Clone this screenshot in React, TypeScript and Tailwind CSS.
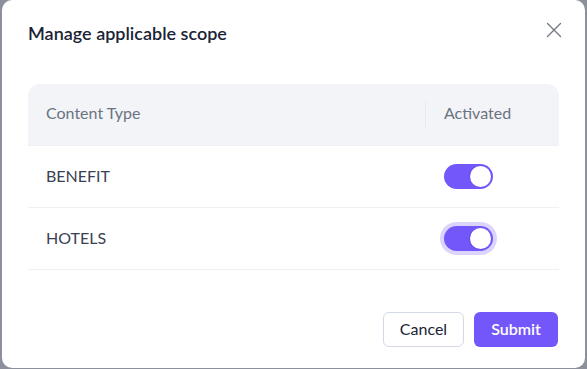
import { useState } from 'react'

interface ScopeRow {
  id: string
  label: string
  active: boolean
}

const initialRows: ScopeRow[] = [
  { id: 'benefit', label: 'BENEFIT', active: true },
  { id: 'hotels', label: 'HOTELS', active: true },
]

function Toggle({ checked, focused, onChange }: { checked: boolean; focused?: boolean; onChange: () => void }) {
  return (
    <button
      type="button"
      role="switch"
      aria-checked={checked}
      onClick={onChange}
      className={`relative flex h-[25px] w-[49px] items-center rounded-full p-[2px] ${
        checked ? 'justify-end bg-[#7457fb]' : 'justify-start bg-gray-300'
      } ${focused ? 'ring-[4px] ring-[#dcd4fd]' : ''}`}
    >
      <span className="block h-[21px] w-[21px] rounded-full bg-white shadow-[-1px_0_1px_rgba(60,30,160,0.25)]" />
    </button>
  )
}

export default function App() {
  const [rows, setRows] = useState<ScopeRow[]>(initialRows)

  const toggleRow = (id: string) => {
    setRows(prev => prev.map(r => (r.id === id ? { ...r, active: !r.active } : r)))
  }

  return (
    <div className="h-[369px] w-[587px] overflow-hidden bg-[#8b909a] px-[2px] font-['Lato','Noto_Sans',sans-serif]">
      <div className="flex h-[368px] flex-col rounded-[10px] bg-white px-[26px]">
        {/* Cabecera */}
        <div className="flex h-[24px] items-center justify-between mt-[21px]">
          <h2 className="text-[18px] font-semibold leading-6 text-[#1b2336]">Manage applicable scope</h2>
          <button type="button" className="-mr-[3px] -mt-[6px] text-[#707683]" aria-label="Close">
            <svg width="16" height="16" viewBox="0 0 16 16" fill="none" stroke="currentColor" strokeWidth="1.3" strokeLinecap="round">
              <path d="M1.5 1.5l13 13M14.5 1.5l-13 13" />
            </svg>
          </button>
        </div>

        {/* Tabla */}
        <div className="mt-[39px]">
          <div className="flex h-[62px] items-center rounded-t-[12px] border-b border-[#eef0f3] bg-[#f3f4f8] text-[16px] text-[#6b7280]">
            <div className="w-[397px] pb-[3px] pl-[18px]">Content Type</div>
            <div className="flex flex-1 items-center">
              <span className="h-[25px] w-px bg-[#e6e8ed]" />
              <span className="pb-[3px] pl-[18px]">Activated</span>
            </div>
          </div>
          {rows.map((row, i) => (
            <div key={row.id} className="flex h-[62px] items-center border-b border-[#eef0f3] text-[16px] text-[#394152]">
              <div className="w-[398px] pb-[2px] pl-[18px]">{row.label}</div>
              <div className="flex-1 pl-[18px]">
                <Toggle checked={row.active} focused={i === 1} onChange={() => toggleRow(row.id)} />
              </div>
            </div>
          ))}
        </div>

        {/* Acciones */}
        <div className="mt-auto mb-[21px] flex justify-end gap-[10px] pr-px">
          <button
            type="button"
            className="h-[35px] w-[81px] rounded-[6px] border border-[#d3dae6] bg-white pb-px text-[16px] text-[#1b2336]"
          >
            Cancel
          </button>
          <button
            type="button"
            className="h-[35px] w-[84px] rounded-[6px] bg-[#7457fb] pb-px text-[16px] font-semibold text-white"
          >
            Submit
          </button>
        </div>
      </div>
    </div>
  )
}
